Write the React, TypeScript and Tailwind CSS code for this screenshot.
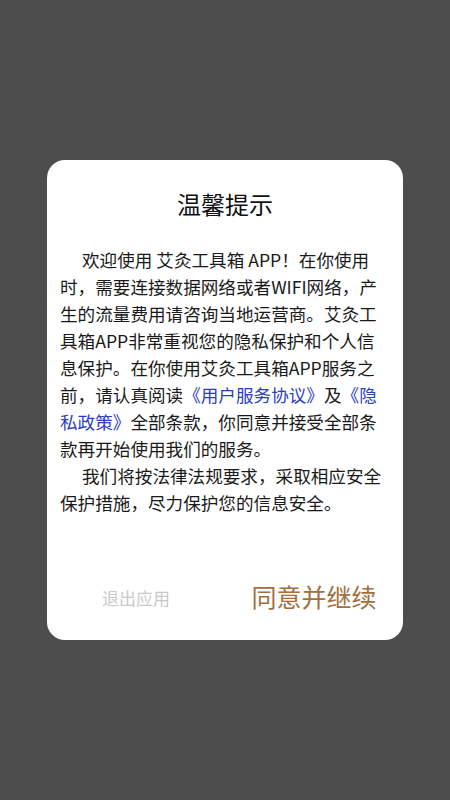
import React from "react";

const lines: { t: React.ReactNode; indent?: boolean }[] = [
  { t: "欢迎使用 艾灸工具箱 APP！在你使用", indent: true },
  { t: "时，需要连接数据网络或者WIFI网络，产" },
  { t: "生的流量费用请咨询当地运营商。艾灸工" },
  { t: "具箱APP非常重视您的隐私保护和个人信" },
  { t: "息保护。在你使用艾灸工具箱APP服务之" },
  {
    t: (
      <>
        前，请认真阅读<span className="text-[#2b3cc4]">《用户服务协议》</span>及
        <span className="text-[#2b3cc4]">《隐</span>
      </>
    ),
  },
  {
    t: (
      <>
        <span className="text-[#2b3cc4]">私政策》</span>全部条款，你同意并接受全部条
      </>
    ),
  },
  { t: "款再开始使用我们的服务。" },
  { t: "我们将按法律法规要求，采取相应安全", indent: true },
  { t: "保护措施，尽力保护您的信息安全。" },
];

export default function App() {
  return (
    <div
      className="min-h-[800px] w-full bg-[#4d4d4d] flex items-center justify-center"
      style={{ fontFamily: '"Noto Sans CJK SC", "Noto Sans", sans-serif' }}
    >
      <div className="w-[356px] h-[480px] bg-white rounded-[18px] flex flex-col">
        <div className="pt-[28px] text-center text-[24px] leading-[32px] text-[#111]">
          温馨提示
        </div>
        <div className="mt-[26px] pl-[13px] text-[17.6px] leading-[27px] text-[#1a1a1a]">
          {lines.map((l, i) => (
            <div
              key={i}
              className={"whitespace-nowrap " + (l.indent ? "pl-[22px]" : "")}
            >
              {l.t}
            </div>
          ))}
        </div>
        <div className="mt-auto h-[88px] flex">
          <div className="flex-1 flex items-center justify-center pt-[4px]">
            <span className="text-[17px] leading-[28px] text-[#c9c9c9]">退出应用</span>
          </div>
          <div className="flex-1 flex items-center justify-center">
            <span className="text-[25px] leading-[30px] text-[#a0703e]">同意并继续</span>
          </div>
        </div>
      </div>
    </div>
  );
}
